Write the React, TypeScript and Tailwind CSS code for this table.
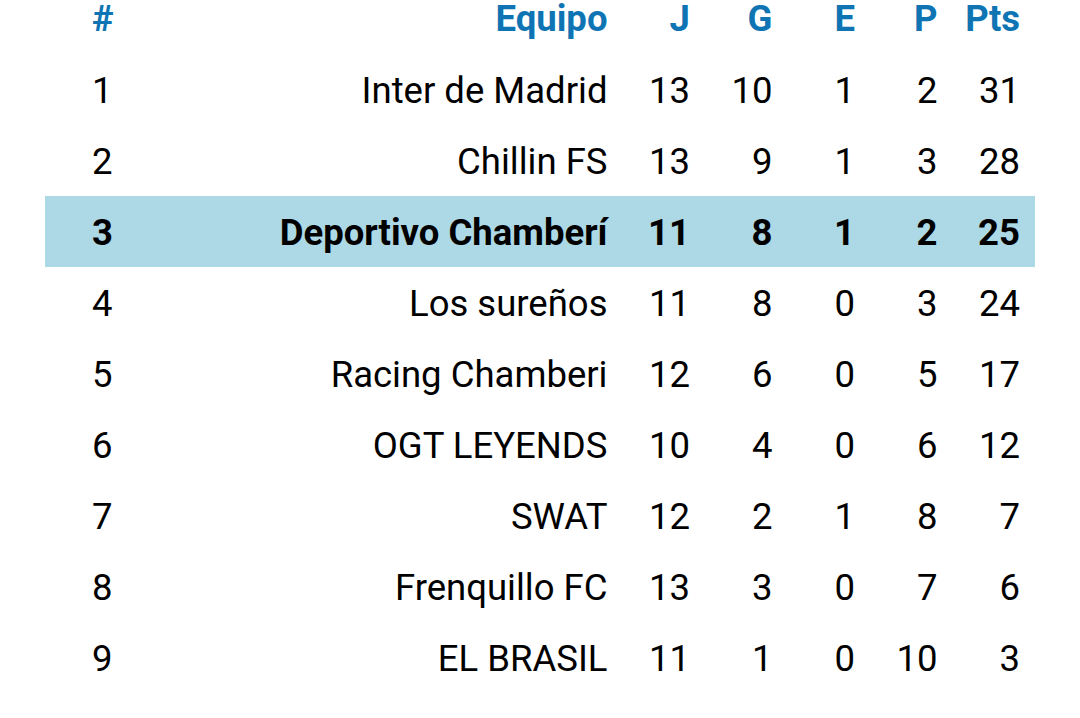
const rows = [
  { pos: 1, team: "Inter de Madrid", j: 13, g: 10, e: 1, p: 2, pts: 31 },
  { pos: 2, team: "Chillin FS", j: 13, g: 9, e: 1, p: 3, pts: 28 },
  { pos: 3, team: "Deportivo Chamberí", j: 11, g: 8, e: 1, p: 2, pts: 25, mine: true },
  { pos: 4, team: "Los sureños", j: 11, g: 8, e: 0, p: 3, pts: 24 },
  { pos: 5, team: "Racing Chamberi", j: 12, g: 6, e: 0, p: 5, pts: 17 },
  { pos: 6, team: "OGT LEYENDS", j: 10, g: 4, e: 0, p: 6, pts: 12 },
  { pos: 7, team: "SWAT", j: 12, g: 2, e: 1, p: 8, pts: 7 },
  { pos: 8, team: "Frenquillo FC", j: 13, g: 3, e: 0, p: 7, pts: 6 },
  { pos: 9, team: "EL BRASIL", j: 11, g: 1, e: 0, p: 10, pts: 3 },
]

function Row({ cells, className }: { cells: (string | number)[]; className: string }) {
  const [pos, team, ...stats] = cells
  return (
    <div className={`flex ${className}`}>
      <div className="w-[120px] pl-[47px]">{pos}</div>
      <div className="flex-1 text-right pr-[15px] whitespace-nowrap">{team}</div>
      {stats.map((s, i) => (
        <div key={i} className="w-[82.5px] text-right pr-[15px]">{s}</div>
      ))}
    </div>
  )
}

export default function App() {
  return (
    <div className="w-[1080px] h-[718px] bg-white overflow-hidden font-['Roboto',sans-serif] text-[36.5px] leading-none text-black">
      <div className="mx-[45px]">
        <Row
          cells={["#", "Equipo", "J", "G", "E", "P", "Pts"]}
          className="h-[54px] items-start pt-[1px] leading-[36px] font-bold text-[#0f74b3]"
        />
        {rows.map((r) => (
          <Row
            key={r.pos}
            cells={[r.pos, r.team, r.j, r.g, r.e, r.p, r.pts]}
            className={`h-[71px] items-center pt-[4px] ${r.mine ? "bg-[#add8e6] font-bold" : ""}`}
          />
        ))}
      </div>
    </div>
  )
}
